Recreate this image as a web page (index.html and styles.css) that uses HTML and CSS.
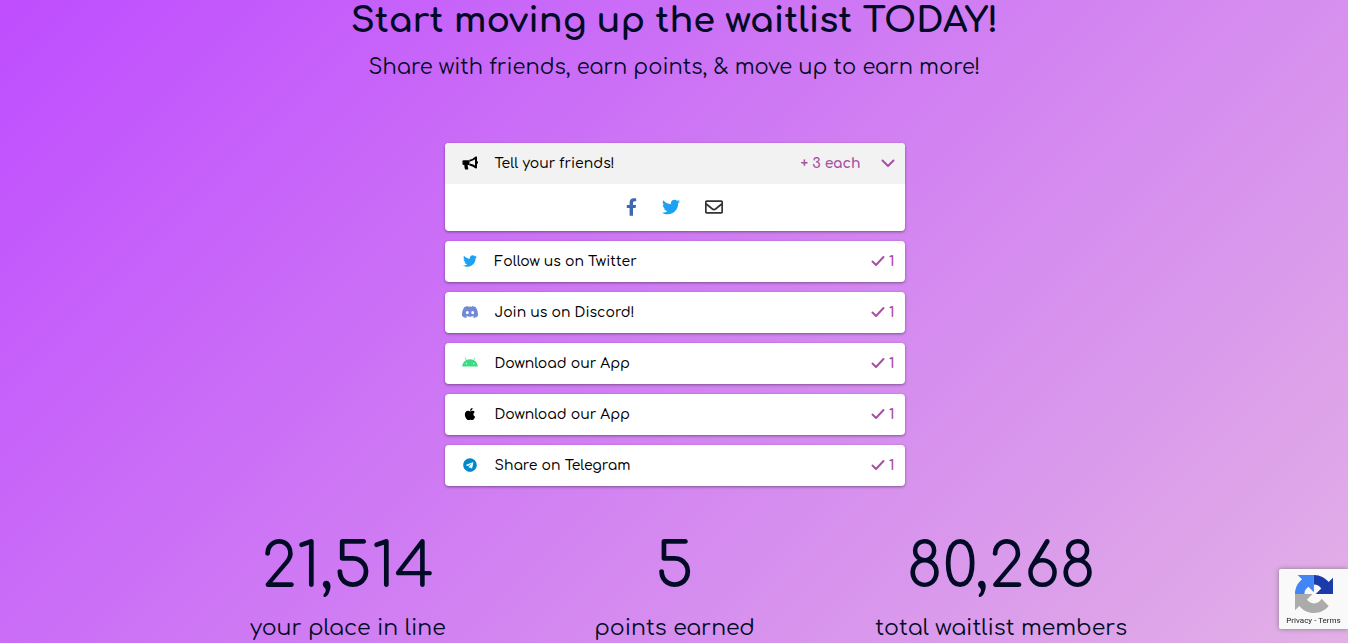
FILE: index.html
```html
<!DOCTYPE html>
<html lang="en">
<head>
  <meta charset="UTF-8" />
  <meta name="viewport" content="width=device-width, initial-scale=1" />
  <title>Waitlist</title>
  <link rel="stylesheet" href="styles.css">
</head>
<body>
  <svg class="sprite" aria-hidden="true">
    <symbol id="bullhorn" viewBox="0 0 16 14"><path d="M1.500 4.200H7.500V9H1.500Q.5 9 .5 8V5.200Q.5 4.200 1.500 4.200z"/><path d="M2.300 8.500h3.200l.8 5.100H3.200Q2.300 12 2.300 8.500z"/><path d="M7.500 4.700Q11 4.300 14 1.400V11.600Q11 8.900 7.500 8.500" fill="none" stroke="currentColor" stroke-width="2" stroke-linejoin="round"/><path d="M14 5.200h1.300q.7 0 .7 1.300t-.7 1.300H14z"/></symbol>
    <symbol id="facebook" viewBox="0 0 320 512"><path d="M279.14 288l14.22-92.66h-88.91v-60.13c0-25.35 12.42-50.06 52.24-50.06h40.42V6.26S260.43 0 225.36 0c-73.22 0-121.08 44.38-121.08 124.72v70.62H22.89V288h81.39v224h100.17V288z"/></symbol>
    <symbol id="twitter" viewBox="0 0 512 512"><path d="M459.37 151.716c.325 4.548.325 9.097.325 13.645 0 138.72-105.583 298.558-298.558 298.558-59.452 0-114.680-17.219-161.137-47.106 8.447.974 16.568 1.299 25.340 1.299 49.055 0 94.213-16.568 130.274-44.832-46.132-.975-84.792-31.188-98.112-72.772 6.498.974 12.995 1.624 19.818 1.624 9.421 0 18.843-1.300 27.614-3.573-48.081-9.747-84.143-51.980-84.143-102.985v-1.299c13.969 7.797 30.214 12.670 47.431 13.319-28.264-18.843-46.781-51.005-46.781-87.391 0-19.492 5.197-37.360 14.294-52.954 51.655 63.675 129.300 105.258 216.365 109.807-1.624-7.797-2.599-15.918-2.599-24.040 0-57.828 46.782-104.934 104.934-104.934 30.213 0 57.502 12.670 76.670 33.137 23.715-4.548 46.456-13.320 66.599-25.340-7.798 24.366-24.366 44.833-46.132 57.827 21.117-2.273 41.584-8.122 60.426-16.243-14.292 20.791-32.161 39.308-52.628 54.253z"/></symbol>
    <symbol id="envelope" viewBox="0 0 512 512"><path d="M464 64H48C21.490 64 0 85.490 0 112v288c0 26.510 21.490 48 48 48h416c26.510 0 48-21.490 48-48V112c0-26.510-21.490-48-48-48zm0 48v40.805c-22.422 18.259-58.168 46.651-134.587 106.490-16.841 13.247-50.201 45.072-73.413 44.701-23.208.375-56.579-31.459-73.413-44.701C106.180 199.465 70.425 171.067 48 152.805V112h416zM48 400V214.398c22.914 18.251 55.409 43.862 104.938 82.646 21.857 17.205 60.134 55.186 103.062 54.955 42.717.231 80.509-37.199 103.053-54.947 49.528-38.783 82.032-64.401 104.947-82.653V400H48z"/></symbol>
    <symbol id="discord" viewBox="0 0 640 512"><path d="M524.531 69.836a1.500 1.500 0 0 0-.764-.7A485.065 485.065 0 0 0 404.081 32.030a1.816 1.816 0 0 0-1.923.910 337.461 337.461 0 0 0-14.900 30.600 447.848 447.848 0 0 0-134.426 0 309.541 309.541 0 0 0-15.135-30.600 1.890 1.890 0 0 0-1.924-.910A483.689 483.689 0 0 0 116.085 69.137a1.712 1.712 0 0 0-.788.676C39.068 183.651 18.186 294.690 28.430 404.354a2.016 2.016 0 0 0 .765 1.375A487.666 487.666 0 0 0 176.020 479.918a1.900 1.900 0 0 0 2.063-.676A348.200 348.200 0 0 0 208.120 430.400a1.860 1.860 0 0 0-1.019-2.588 321.173 321.173 0 0 1-45.868-21.853 1.885 1.885 0 0 1-.185-3.126c3.082-2.309 6.166-4.711 9.109-7.137a1.819 1.819 0 0 1 1.900-.256c96.229 43.917 200.410 43.917 295.500 0a1.812 1.812 0 0 1 1.924.233c2.944 2.426 6.027 4.851 9.132 7.160a1.884 1.884 0 0 1-.162 3.126 301.407 301.407 0 0 1-45.890 21.830 1.875 1.875 0 0 0-1 2.611 391.055 391.055 0 0 0 30.014 48.815 1.864 1.864 0 0 0 2.063.7A486.048 486.048 0 0 0 610.700 405.729a1.882 1.882 0 0 0 .765-1.352C623.729 277.594 590.933 167.465 524.531 69.836zM222.491 337.580c-28.972 0-52.844-26.587-52.844-59.239s23.409-59.241 52.844-59.241c29.665 0 53.306 26.820 52.843 59.239C275.334 310.993 251.924 337.580 222.491 337.580zm195.380 0c-28.971 0-52.843-26.587-52.843-59.239s23.409-59.241 52.843-59.241c29.667 0 53.307 26.820 52.844 59.239C470.715 310.993 447.538 337.580 417.871 337.580z"/></symbol>
    <symbol id="android" viewBox="0 0 576 512"><path d="M420.550 301.930a24 24 0 1 1 24-24 24 24 0 0 1-24 24m-265.100 0a24 24 0 1 1 24-24 24 24 0 0 1-24 24m273.700-144.480 47.940-83a10 10 0 1 0-17.270-10l-48.540 84.070a301.250 301.250 0 0 0-246.560 0L116.180 64.450a10 10 0 1 0-17.270 10l47.940 83C64.530 202.220 8.240 285.550 0 384h576c-8.240-98.450-64.540-181.780-146.850-226.550"/></symbol>
    <symbol id="apple" viewBox="0 0 384 512"><path d="M318.700 268.700c-.2-36.700 16.400-64.400 50-84.800-18.800-26.900-47.200-41.700-84.700-44.600-35.500-2.800-74.300 20.700-88.500 20.700-15 0-49.400-19.700-76.400-19.700C63.300 141.200 4 184.800 4 273.500q0 39.300 14.400 81.200c12.800 36.700 59 126.700 107.200 125.200 25.200-.6 43-17.900 75.800-17.900 31.800 0 48.300 17.900 76.400 17.900 48.600-.7 90.400-82.500 102.600-119.300-65.200-30.700-61.700-90-61.700-91.900zm-56.600-164.200c27.300-32.400 24.800-61.900 24-72.500-24.100 1.400-52 16.400-67.900 34.900-17.500 19.800-27.800 44.300-25.600 71.900 26.100 2 49.900-11.400 69.500-34.300z"/></symbol>
    <symbol id="telegram" viewBox="0 0 496 512"><path d="M248 8C111 8 0 119 0 256s111 248 248 248 248-111 248-248S385 8 248 8zm121.800 169.900l-40.700 191.800c-3 13.600-11.100 16.900-22.400 10.500l-62-45.700-29.900 28.800c-3.300 3.300-6.100 6.100-12.500 6.100l4.400-63.100 114.900-103.800c5-4.400-1.100-6.900-7.700-2.500l-142 89.400-61.200-19.100c-13.300-4.200-13.600-13.300 2.800-19.700l239.100-92.200c11.100-4 20.800 2.700 17.200 19.500z"/></symbol>
    <symbol id="check" viewBox="0 0 14 12"><path d="M1.500 6.500 5 10 12.500 2" fill="none" stroke="currentColor" stroke-width="2" stroke-linecap="round" stroke-linejoin="round"/></symbol>
    <symbol id="chevron" viewBox="0 0 14 12"><path d="M1.500 3.500 7 9l5.500-5.500" fill="none" stroke="currentColor" stroke-width="2" stroke-linecap="round" stroke-linejoin="round"/></symbol>
  </svg>

  <main class="waitlist">
    <h1>Start moving up the waitlist TODAY!</h1>
    <p class="subtitle">Share with friends, earn points, &amp; move up to earn more!</p>

    <div class="actions">
      <div class="card">
        <button type="button" class="row row-open" aria-expanded="true">
          <svg class="icon"><use href="#bullhorn"/></svg>
          <span class="label">Tell your friends!</span>
          <span class="points each">+ 3 each</span>
          <svg class="mark"><use href="#chevron"/></svg>
        </button>
        <div class="share">
          <a href="#" class="facebook" aria-label="Facebook"><svg><use href="#facebook"/></svg></a>
          <a href="#" class="twitter" aria-label="Twitter"><svg><use href="#twitter"/></svg></a>
          <a href="#" class="email" aria-label="Email"><svg><use href="#envelope"/></svg></a>
        </div>
      </div>
      <button type="button" class="card row">
        <svg class="icon twitter"><use href="#twitter"/></svg>
        <span class="label">Follow us on Twitter</span>
        <svg class="mark"><use href="#check"/></svg>
        <span class="points">1</span>
      </button>
      <button type="button" class="card row">
        <svg class="icon discord"><use href="#discord"/></svg>
        <span class="label">Join us on Discord!</span>
        <svg class="mark"><use href="#check"/></svg>
        <span class="points">1</span>
      </button>
      <button type="button" class="card row">
        <svg class="icon android"><use href="#android"/></svg>
        <span class="label">Download our App</span>
        <svg class="mark"><use href="#check"/></svg>
        <span class="points">1</span>
      </button>
      <button type="button" class="card row">
        <svg class="icon"><use href="#apple"/></svg>
        <span class="label">Download our App</span>
        <svg class="mark"><use href="#check"/></svg>
        <span class="points">1</span>
      </button>
      <button type="button" class="card row">
        <svg class="icon telegram"><use href="#telegram"/></svg>
        <span class="label">Share on Telegram</span>
        <svg class="mark"><use href="#check"/></svg>
        <span class="points">1</span>
      </button>
    </div>

    <div class="stats">
      <div class="stat">
        <div class="number">21,514</div>
        <div class="caption">your place in line</div>
      </div>
      <div class="stat">
        <div class="number">5</div>
        <div class="caption">points earned</div>
      </div>
      <div class="stat">
        <div class="number">80,268</div>
        <div class="caption">total waitlist members</div>
      </div>
    </div>
  </main>

  <div class="recaptcha">
    <svg class="recaptcha-logo" viewBox="0 0 64 64" aria-hidden="true">
      <path fill="#1c3aa9" d="M64 31.955a33 33 0 0 0-.014-.916V4.570l-7.317 7.317C50.680 4.557 41.570-.130 31.968 0v15.900c5 0 9.500 2.500 12.200 6.700l-9.300 9.400z"/>
      <path fill="#4285f4" d="M31.862 0a33 33 0 0 0-.916.014H4.477l7.317 7.317C4.464 13.320-.130 22.430 0 32.032h15.900c0-5 2.500-9.500 6.700-12.200l9.300 9.300z"/>
      <path fill="#ababab" d="M0 32.033c.001.307.008.612.014.916v26.470l7.317-7.318C13.320 59.430 22.430 64 32.032 64c9.990 0 18.865-4.577 24.734-11.757L44.772 40.122c-2.900 5.100-7.500 7.700-12.800 7.700-5 0-9.600-2.500-11.800-6.500l9.200-9.288z"/>
    </svg>
    <div class="recaptcha-links"><a href="#">Privacy</a> - <a href="#">Terms</a></div>
  </div>
</body>
</html>
```
FILE: styles.css
```css
* {
  margin: 0;
  padding: 0;
  box-sizing: border-box;
}

body {
  font-family: Comfortaa, Quicksand, Lato, sans-serif;
  color: #020b26;
  min-height: 100vh;
  background: linear-gradient(135deg, #bf4dff, #e2b0e6);
}

.sprite {
  display: none;
}

.waitlist {
  padding-left: 1px;
  text-align: center;
}

h1 {
  font-size: 35px;
  font-weight: 700;
  line-height: 42px;
}

.subtitle {
  margin-top: 9px;
  font-size: 21px;
  line-height: 32px;
}

.actions {
  display: flex;
  flex-direction: column;
  gap: 10px;
  max-width: 460px;
  margin: 60px auto 0;
}

.card {
  background-color: #fff;
  border-radius: 4px;
  box-shadow: 0 1px 3px rgba(0, 0, 0, 0.4);
  overflow: hidden;
}

.row {
  display: flex;
  align-items: center;
  width: 100%;
  height: 41px;
  padding: 0 10px 0 15px;
  border: none;
  font-family: inherit;
  font-size: 14px;
  font-weight: 500;
  line-height: 20px;
  color: #000;
  text-align: left;
  cursor: pointer;
}

.row-open {
  background-color: #f2f2f2;
}

.icon {
  width: 20px;
  height: 14px;
  margin: 0 15px 1px 0;
  fill: currentColor;
}

.label {
  flex: 1;
}

.points,
.mark {
  color: #a750a4;
}

.points {
  margin-left: 4px;
  font-weight: 700;
}

.each {
  margin-right: 20px;
}

.mark {
  width: 14px;
  height: 12px;
  margin-bottom: 1px;
}

.share {
  display: flex;
  justify-content: center;
  align-items: center;
  gap: 25px;
  height: 47px;
  padding-bottom: 1px;
}

.share a,
.share svg {
  display: block;
  height: 18px;
}

.share svg {
  width: 18px;
  fill: currentColor;
}

.share .facebook svg {
  width: 11px;
}

.facebook {
  color: #4267b2;
}

.twitter {
  color: #1da1f2;
}

.email {
  color: #333;
}

.discord {
  color: #7289da;
}

.android {
  color: #3ddc84;
}

.telegram {
  color: #0088cc;
}

.stats {
  display: grid;
  grid-template-columns: repeat(3, 1fr);
  max-width: 980px;
  margin: 41px auto 0;
}

.number {
  font-size: 61px;
  line-height: 80px;
}

.caption {
  margin-top: 6px;
  font-size: 22px;
  line-height: 30px;
}

.recaptcha {
  position: fixed;
  right: 0;
  bottom: 14px;
  width: 69px;
  height: 60px;
  padding-top: 6px;
  border-radius: 2px 0 0 2px;
  background-color: #f9f9f9;
  box-shadow: 0 0 5px gray;
  text-align: center;
}

.recaptcha-logo {
  display: block;
  width: 38px;
  height: 38px;
  margin: 0 auto;
}

.recaptcha-links {
  margin-top: 2px;
  font: 8px/12px Roboto, sans-serif;
  color: #222;
}

.recaptcha-links a {
  color: inherit;
  text-decoration: none;
}
```
